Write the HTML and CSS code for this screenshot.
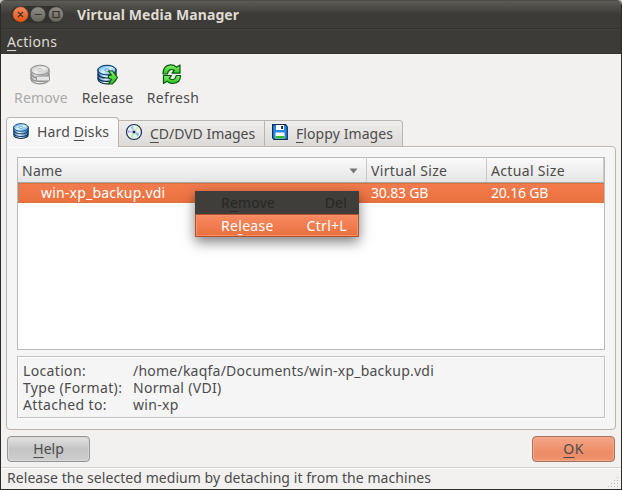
FILE: index.html
```html
<!DOCTYPE html>
<html lang="en">
<head>
<meta charset="utf-8">
<title>Virtual Media Manager</title>
<link rel="stylesheet" href="styles.css">
</head>
<body>
<svg class="defs" width="0" height="0" aria-hidden="true">
  <defs>
    <linearGradient id="blue" x1="0" x2="1"><stop offset="0" stop-color="#2f7fd0"/><stop offset=".4" stop-color="#e8f8ff"/><stop offset="1" stop-color="#1670c4"/></linearGradient>
    <linearGradient id="top" x1="0" x2="1" y2="1"><stop offset="0" stop-color="#3b9df0"/><stop offset=".5" stop-color="#d9f4ff"/><stop offset="1" stop-color="#2588df"/></linearGradient>
    <linearGradient id="green" x1="0" x2="0" y2="1"><stop offset="0" stop-color="#8cf06a"/><stop offset="1" stop-color="#24c31c"/></linearGradient>
    <symbol id="stack" viewBox="0 0 20 20">
      <path d="M1 5v9.500C1 17.500 5 19.300 10 19.300s9-1.800 9-4.800V5z" fill="url(#blue)" stroke="#12314f" stroke-width="1.300"/>
      <path d="M1 9.500c1 3 5 4 9 4s8-1 9-4M1 13.200c1 3 5 3.600 9 3.600s8-.6 9-3.600" fill="none" stroke="#102d4b" stroke-width="1.200"/>
      <ellipse cx="10" cy="5.600" rx="9" ry="4.800" fill="url(#top)" stroke="#174a78" stroke-width="1.200"/>
      <ellipse cx="10" cy="5.600" rx="2.200" ry="1.200" fill="#fff" stroke="#377fae" stroke-width=".8"/>
    </symbol>
  </defs>
</svg>
<div class="window">
  <header class="titlebar">
    <div class="controls">
      <svg width="53" height="17" viewBox="0 0 53 17">
        <defs><linearGradient id="orange" x1="0" x2="0" y2="1"><stop offset="0" stop-color="#f98a60"/><stop offset="1" stop-color="#e2500f"/></linearGradient>
        <linearGradient id="gray" x1="0" x2="0" y2="1"><stop offset="0" stop-color="#908f87"/><stop offset="1" stop-color="#64635c"/></linearGradient></defs>
        <rect width="53" height="17" rx="8.500" fill="#33322e"/>
        <g stroke="#302f2b" stroke-width=".6"><circle cx="9.500" cy="8.500" r="7.900" fill="url(#orange)"/><circle cx="27" cy="8.500" r="7.700" fill="url(#gray)"/><circle cx="45" cy="8.500" r="7.700" fill="url(#gray)"/></g>
        <path d="M7 6l5 5m0-5l-5 5M23.500 8.500h7M42 5.500h6v6h-6z" fill="none" stroke="#3c3029" stroke-width="1.200"/>
      </svg>
    </div>
    <h1 class="title">Virtual Media Manager</h1>
  </header>
  <nav class="menubar"><span class="t-actions"><u>A</u>ctions</span></nav>
  <main class="content">
    <div class="toolbar">
      <div class="tool tool-remove disabled">
        <svg width="22" height="22" viewBox="0 0 22 22"><g class="mono"><use href="#stack" x="0" y="0" width="20" height="21"/></g><rect x="6.500" y="12" width="13" height="5" rx="1" fill="#e5e5e5" stroke="#909090"/></svg>
        <span class="t-remove">Remove</span>
      </div>
      <div class="tool tool-release">
        <svg width="22" height="22" viewBox="0 0 22 22"><use href="#stack" x="0" y="0" width="20" height="21"/><path d="M11.500 7h4l5 6.500-5 6.500h-4l3-4.500-3-1.500v-2.500l3-.5z" fill="url(#green)" stroke="#145810" stroke-width="1.100"/></svg>
        <span class="t-release">Release</span>
      </div>
      <div class="tool tool-refresh">
        <svg width="22" height="22" viewBox="0 0 22 22"><g fill="url(#green)" stroke="#075810" stroke-width="1.200" stroke-linejoin="round"><path d="M1 10C1 4.500 4 1.200 8.500 .9c2.800-.1 4.500.8 6 2.300L18 1v8.200h-8l2.300-3C9.500 4.700 6 5.500 5.500 10z"/><path d="M18.500 11.500c0 5-3 7.700-7.500 8-2.800.1-4.500-.8-6-2.200L1.500 19.500v-8h8l-2.300 2.800c2.800 2.300 6.300 1.700 7-2.800z"/></g></svg>
        <span class="t-refresh">Refresh</span>
      </div>
    </div>
    <div class="tabs">
      <div class="tab active">
        <svg width="18" height="18"><use href="#stack" x="1" y="1" width="16" height="16"/></svg>
        <span class="t-hard">Hard <u>D</u>isks</span>
      </div>
      <div class="tab tab-cd">
        <svg width="18" height="18" viewBox="0 0 18 18"><circle cx="9" cy="9" r="7.500" fill="#edf6f7" stroke="#162d4f" stroke-width="1.200"/><path d="M9 9L5 4l3-1z" fill="#8ac9ff"/><path d="M9 9l3-6 2 2z" fill="#d8ef9a"/><path d="M9 9l5 1-1 4z" fill="#82b5ff"/><path d="M9 9l-1 6-3-2z" fill="#b9f0a5"/><path d="M9 9L3 10V7z" fill="#c7aaf8"/><circle cx="9" cy="9" r="2.500" fill="#c5d3da"/><circle cx="9" cy="9" r="1.300" fill="#112945"/></svg>
        <span class="t-cd"><u>C</u>D/DVD Images</span>
      </div>
      <div class="tab tab-floppy">
        <svg width="18" height="18" viewBox="0 0 18 18"><path d="M1.600 1.600h13L16.300 4v12.300H3L1.600 14.800z" fill="#2588e6" stroke="#102c58" stroke-width="1.200"/><path d="M5 2h8v5H5zM4.500 9.500h9v6h-9z" fill="#fff"/><path d="M10 3h2v3h-2z" fill="#17365e"/><path d="M4.500 13h9v2.500h-9z" fill="#35b936"/></svg>
        <span class="t-floppy"><u>F</u>loppy Images</span>
      </div>
    </div>
    <section class="panel">
      <div class="table">
        <div class="row head">
          <div class="cell"><span class="t-name">Name</span><svg class="sort" width="9" height="6" viewBox="0 0 9 6"><path d="M.5.500h8L4.500 5.500z" fill="#777"/></svg></div>
          <div class="cell"><span class="t-virtual">Virtual Size</span></div>
          <div class="cell"><span class="t-actual">Actual Size</span></div>
        </div>
        <div class="row selected">
          <div class="cell file"><span class="t-file">win-xp_backup.vdi</span></div>
          <div class="cell"><span class="t-size">30.83 GB</span></div>
          <div class="cell"><span class="t-size">20.16 GB</span></div>
        </div>
      </div>
      <dl class="info">
        <dt class="t-location">Location:</dt><dd class="t-path">/home/kaqfa/Documents/win-xp_backup.vdi</dd>
        <dt class="t-type">Type (Format):</dt><dd class="t-normal">Normal (VDI)</dd>
        <dt class="t-attached">Attached to:</dt><dd class="t-winxp">win-xp</dd>
      </dl>
    </section>
    <div class="buttons">
      <button class="btn"><span class="t-help"><u>H</u>elp</span></button>
      <button class="btn primary"><span class="t-ok"><u>O</u>K</span></button>
    </div>
    <footer class="status">
      <span class="t-status">Release the selected medium by detaching it from the machines</span>
      <svg class="grip" width="11" height="11" viewBox="0 0 11 11"><path d="M9 0h1v1H9zM6 3h1v1H6zM9 3h1v1H9zM3 6h1v1H3zM6 6h1v1H6zM9 6h1v1H9zM0 9h1v1H0zM3 9h1v1H3zM6 9h1v1H6zM9 9h1v1H9z" fill="#bbb9b5"/></svg>
    </footer>
  </main>
  <div class="menu">
    <div class="item off"><span class="t-mremove">R<u>e</u>move</span><span class="t-del">Del</span></div>
    <div class="item hot"><span class="t-mrelease">Re<u>l</u>ease</span><span class="t-ctrl">Ctrl+L</span></div>
  </div>
</div>
</body>
</html>
```
FILE: styles.css
```css
* { box-sizing: border-box; }
body { margin: 0; background: #c9c9c9; font: 14px/17px "Noto Sans", sans-serif; color: #4c4c4c; }
.defs { position: absolute; }
u { text-decoration: underline 1px; text-underline-offset: 3px; text-decoration-skip-ink: none; }
span, dt, dd, h1 { white-space: nowrap; }
.window { position: relative; width: 622px; height: 490px; display: flex; flex-direction: column; border: solid #2c2b28; border-width: 0 1px 1px; border-radius: 5px 5px 0 0; background: #f2f1f0; overflow: hidden; }
.titlebar { height: 29px; flex: none; display: flex; padding: 5px 0 0 10px; border-top: 1px solid #4d4c47; border-bottom: 1px solid #343330; background: linear-gradient(#5c5b54, #3c3b37 50%); }
.controls { width: 66px; height: 17px; }
.controls svg { display: block; }
.title { margin: 0; font-size: 14px; line-height: 17px; color: #dfdbd2; letter-spacing: .1px; }
.menubar { height: 25px; flex: none; padding: 3px 6px; border-top: 1px solid #42413d; border-bottom: 1px solid #353430; background: #3c3b37; color: #dfdbd2; letter-spacing: .3px; }
.content { flex: 1; display: flex; flex-direction: column; min-height: 0; }
.toolbar { height: 63px; display: flex; padding: 10px 0 0 13px; }
.tool { display: flex; flex-direction: column; align-items: center; letter-spacing: .15px; }
.tool svg { display: block; margin-bottom: 3px; }
.tool-remove { width: 54px; }
.tool-release { width: 51px; margin-left: 14px; }
.tool-refresh { width: 52px; margin-left: 14px; letter-spacing: .3px; }
.disabled { color: #aaa; }
.mono { filter: grayscale(1) opacity(.5); }
.tabs { display: flex; height: 30px; padding-left: 5px; align-items: flex-end; position: relative; z-index: 1; }
.tab { height: 27px; display: flex; padding: 2px 0 0 8px; gap: 6px; border: 1px solid #b9b4ae; border-left: 0; background: linear-gradient(#efeeec, #dcdad7); }
.tab svg { flex: none; }
.tab span { padding-top: 2px; }
.tab.active { width: 113px; height: 30px; padding: 4px 0 0 5px; gap: 7px; border-left: 1px solid #b9b4ae; border-bottom: 0; border-radius: 4px 4px 0 0; background: linear-gradient(#fbfbfb, #f5f5f5); letter-spacing: .15px; }
.tab.active span { padding-top: 1px; }
.tab-cd { width: 146px; padding-left: 6px; gap: 7px; }
.t-cd { letter-spacing: -.03px; }
.tab-floppy { width: 138px; padding-left: 6px; border-radius: 0 4px 0 0; letter-spacing: .08px; }
.tab-floppy span { margin-left: 1px; }
.panel { height: 284px; width: 610px; margin: -1px 5px 0; padding: 10px; border: 1px solid #b9b4ae; border-radius: 0 4px 4px 4px; background: #f5f5f5; box-shadow: inset 0 1px #fff; }
.table { height: 193px; border: 1px solid #bcbab6; background: #fff; }
.row { display: grid; grid-template-columns: 349px 120px 1fr; }
.head { height: 25px; border-bottom: 1px solid #aaa8a4; background: linear-gradient(#fafafa, #e5e5e5); }
.head .cell { display: flex; justify-content: space-between; align-items: center; padding: 0 8px 0 4px; border-right: 1px solid #cbc9c6; }
.sort { margin-top: 2px; }
.t-name { letter-spacing: .25px; }
.t-virtual, .t-actual { letter-spacing: .33px; }
.selected { height: 20px; border: 1px dotted #c46e43; border-left-color: #89938c; border-right: 0; background: linear-gradient(#f27b4e, #eb713e); color: #fff; }
.selected .cell { padding: 0 0 0 3px; letter-spacing: -.2px; }
.selected .file { padding-left: 22px; letter-spacing: .2px; }
.info { display: grid; grid-template-columns: 110px 1fr; grid-template-rows: repeat(3, 17px); height: 62px; margin: 6px 0 0; padding: 5px 5px; border: 1px solid #c4c2bf; box-shadow: inset 1px 1px #fff, 1px 1px #fff; letter-spacing: .34px; }
.info dd { margin: 0; letter-spacing: .3px; }
.info .t-path { letter-spacing: .23px; }
.buttons { display: flex; justify-content: space-between; height: 37px; padding: 6px; }
.btn { width: 83px; height: 26px; padding: 0 0 1px; border: 1px solid #979592; border-radius: 4px; background: linear-gradient(#e3e3e3, #c4c4c4 50%, #cecece); color: #4c4c4c; font: inherit; box-shadow: inset 0 0 0 1px #d8d8d8; }
.btn.primary { border-color: #a5745f; background: linear-gradient(#f6a689, #ed8c66 65%, #f0946e); box-shadow: inset 0 0 0 1px #f6a789; letter-spacing: .5px; }
.status { display: flex; justify-content: space-between; flex: 1; padding: 1px 2px 0 6px; border-top: 1px solid #d5d3d0; box-shadow: inset 0 1px #fff; letter-spacing: .055px; }
.grip { margin-top: 8px; }
.menu { position: absolute; left: 194px; top: 191px; z-index: 2; width: 164px; height: 46px; background: #3f3e3a; box-shadow: 0 5px 12px rgba(0,0,0,.5); }
.item { height: 23px; display: flex; justify-content: space-between; padding: 3px 12px 0 26px; letter-spacing: .2px; }
.off { color: #282724; }
.hot { padding: 2px 11px 0 25px; border: 1px solid #b4512d; background: linear-gradient(#f98a62, #e9703e); box-shadow: inset 0 0 0 1px #fa8e66; color: #fff; letter-spacing: .3px; }
```
